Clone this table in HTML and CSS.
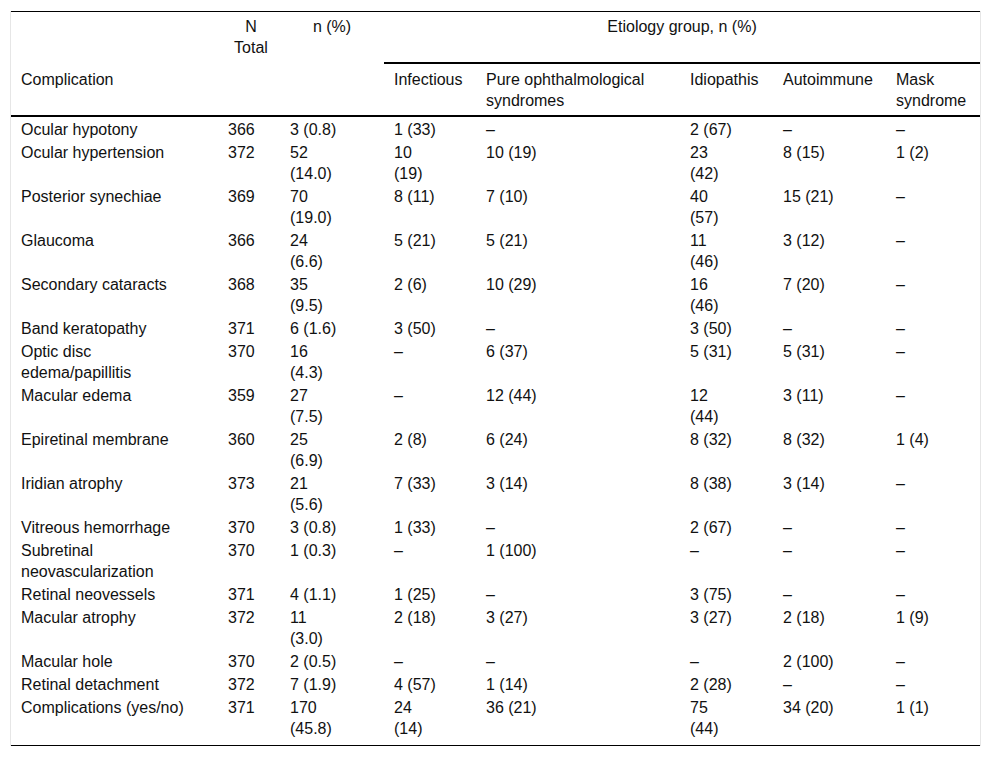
FILE: index.html
```html
<!DOCTYPE html>
<html lang="en">
<head>
<meta charset="utf-8">
<title>Complications by etiology group</title>
<link rel="stylesheet" href="styles.css">
</head>
<body>
<div class="frame">
<table class="data">
<colgroup>
<col class="c1"><col class="c2"><col class="c3"><col class="c4"><col class="c5"><col class="c6"><col class="c7"><col class="c8">
</colgroup>
<thead>
<tr class="h1">
<th></th>
<th class="ntot">N<br>Total</th>
<th class="npct">n (%)</th>
<th class="etio" colspan="5">Etiology group, n (%)</th>
</tr>
<tr class="h2">
<th>Complication</th>
<th></th>
<th></th>
<th>Infectious</th>
<th>Pure ophthalmological<br>syndromes</th>
<th>Idiopathis</th>
<th>Autoimmune</th>
<th>Mask<br>syndrome</th>
</tr>
</thead>
<tbody>
<tr><td>Ocular hypotony</td><td>366</td><td>3 (0.8)</td><td>1 (33)</td><td>–</td><td>2 (67)</td><td>–</td><td>–</td></tr>
<tr><td>Ocular hypertension</td><td>372</td><td>52<br>(14.0)</td><td>10<br>(19)</td><td>10 (19)</td><td>23<br>(42)</td><td>8 (15)</td><td>1 (2)</td></tr>
<tr><td>Posterior synechiae</td><td>369</td><td>70<br>(19.0)</td><td>8 (11)</td><td>7 (10)</td><td>40<br>(57)</td><td>15 (21)</td><td>–</td></tr>
<tr><td>Glaucoma</td><td>366</td><td>24<br>(6.6)</td><td>5 (21)</td><td>5 (21)</td><td>11<br>(46)</td><td>3 (12)</td><td>–</td></tr>
<tr><td>Secondary cataracts</td><td>368</td><td>35<br>(9.5)</td><td>2 (6)</td><td>10 (29)</td><td>16<br>(46)</td><td>7 (20)</td><td>–</td></tr>
<tr><td>Band keratopathy</td><td>371</td><td>6 (1.6)</td><td>3 (50)</td><td>–</td><td>3 (50)</td><td>–</td><td>–</td></tr>
<tr><td>Optic disc<br>edema/papillitis</td><td>370</td><td>16<br>(4.3)</td><td>–</td><td>6 (37)</td><td>5 (31)</td><td>5 (31)</td><td>–</td></tr>
<tr><td>Macular edema</td><td>359</td><td>27<br>(7.5)</td><td>–</td><td>12 (44)</td><td>12<br>(44)</td><td>3 (11)</td><td>–</td></tr>
<tr><td>Epiretinal membrane</td><td>360</td><td>25<br>(6.9)</td><td>2 (8)</td><td>6 (24)</td><td>8 (32)</td><td>8 (32)</td><td>1 (4)</td></tr>
<tr><td>Iridian atrophy</td><td>373</td><td>21<br>(5.6)</td><td>7 (33)</td><td>3 (14)</td><td>8 (38)</td><td>3 (14)</td><td>–</td></tr>
<tr><td>Vitreous hemorrhage</td><td>370</td><td>3 (0.8)</td><td>1 (33)</td><td>–</td><td>2 (67)</td><td>–</td><td>–</td></tr>
<tr><td>Subretinal<br>neovascularization</td><td>370</td><td>1 (0.3)</td><td>–</td><td>1 (100)</td><td>–</td><td>–</td><td>–</td></tr>
<tr><td>Retinal neovessels</td><td>371</td><td>4 (1.1)</td><td>1 (25)</td><td>–</td><td>3 (75)</td><td>–</td><td>–</td></tr>
<tr><td>Macular atrophy</td><td>372</td><td>11<br>(3.0)</td><td>2 (18)</td><td>3 (27)</td><td>3 (27)</td><td>2 (18)</td><td>1 (9)</td></tr>
<tr><td>Macular hole</td><td>370</td><td>2 (0.5)</td><td>–</td><td>–</td><td>–</td><td>2 (100)</td><td>–</td></tr>
<tr><td>Retinal detachment</td><td>372</td><td>7 (1.9)</td><td>4 (57)</td><td>1 (14)</td><td>2 (28)</td><td>–</td><td>–</td></tr>
<tr class="last"><td>Complications (yes/no)</td><td>371</td><td>170<br>(45.8)</td><td>24<br>(14)</td><td>36 (21)</td><td>75<br>(44)</td><td>34 (20)</td><td>1 (1)</td></tr>
</tbody>
</table>
</div>
</body>
</html>
```
FILE: styles.css
```css
html, body {
  margin: 0;
  padding: 0;
  background: #fff;
}

body {
  font-family: "Liberation Sans", Arial, sans-serif;
  font-size: 16px;
  line-height: 21px;
  color: #111;
}

.frame {
  margin: 11px 0 0 10px;
  width: 969px;
  border-left: 1px solid #e6e6e6;
  border-right: 1px solid #e6e6e6;
}

.data {
  width: 969px;
  table-layout: fixed;
  border-collapse: separate;
  border-spacing: 0;
  border-top: 1px solid #000;
  border-bottom: 1px solid #000;
}

.c1 { width: 207px; }
.c2 { width: 62px; }
.c3 { width: 104px; }
.c4 { width: 92px; }
.c5 { width: 204px; }
.c6 { width: 93px; }
.c7 { width: 113px; }
.c8 { width: 94px; }

.data th,
.data td {
  padding: 2px 10px 0;
  text-align: left;
  vertical-align: top;
  font-weight: normal;
  white-space: nowrap;
}

.h1 th {
  padding-top: 4px;
  padding-bottom: 6px;
}

.h1 .ntot {
  text-align: center;
  padding-right: 6px;
}

.h1 .npct {
  text-align: center;
}

.h1 .etio {
  text-align: center;
  padding-bottom: 4px;
  border-bottom: 2px solid #000;
}

.h2 th {
  padding-top: 5px;
  padding-bottom: 4px;
  border-bottom: 2px solid #000;
}

.last td {
  padding-bottom: 6px;
}
```
